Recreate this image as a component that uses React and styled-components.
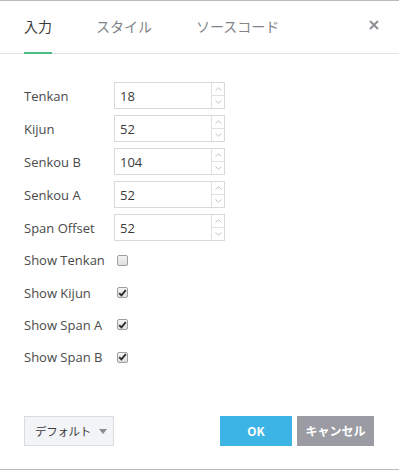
import React from 'react';
import styled, { createGlobalStyle } from 'styled-components';

const Global = createGlobalStyle`
  html, body { margin: 0; padding: 0; background: #fff; }
  body { font-family: "Open Sans", "Noto Sans CJK JP", sans-serif; }
`;

const Dialog = styled.div`
  width: 399px;
  height: 470px;
  box-sizing: border-box;
  border-top: 1px solid #bcbcbc;
  border-bottom: 1px solid #bcbcbc;
  display: flex;
  flex-direction: column;
  background: #fff;
`;

const Header = styled.div`
  height: 53px;
  box-sizing: border-box;
  padding: 0 20px 0 24px;
  display: flex;
  align-items: stretch;
  border-bottom: 1px solid #e1e3e6;
`;

const Tab = styled.div`
  position: relative;
  display: flex;
  align-items: center;
  margin-right: 44px;
  font-size: 14px;
  color: ${p => (p.$active ? '#3a3a3a' : '#808388')};
  font-family: "Noto Sans CJK JP", sans-serif;
  padding-bottom: 2px;
  &::after {
    content: '';
    display: ${p => (p.$active ? 'block' : 'none')};
    position: absolute;
    left: 0;
    right: 0;
    bottom: -1px;
    height: 2px;
    background: #4dbb85;
  }
`;

const Close = styled.div`
  margin-left: auto;
  display: flex;
  align-items: center;
  padding-bottom: 4px;
`;

const Body = styled.div`
  flex: 1;
  padding: 28px 24px 0;
`;

const FieldRow = styled.div`
  display: flex;
  align-items: center;
  height: 27px;
  margin-bottom: 6px;
`;

const Label = styled.div`
  width: 90px;
  font-size: 13px;
  color: #4a4a4a;
`;

const NumberBox = styled.div`
  width: 111px;
  height: 27px;
  box-sizing: border-box;
  border: 1px solid #d9d9d9;
  display: flex;
`;

const Value = styled.div`
  flex: 1;
  font-size: 13px;
  color: #3a3a3a;
  padding: 0 5px;
  display: flex;
  align-items: center;
  padding-top: 1px;
`;

const Spinner = styled.div`
  width: 12px;
  border-left: 1px solid #e1e1e1;
  display: flex;
  flex-direction: column;
`;

const SpinHalf = styled.div`
  flex: 1;
  display: flex;
  align-items: center;
  justify-content: center;
  & + & { border-top: 1px solid #e1e1e1; }
`;

const CheckList = styled.div`
  margin-top: -3px;
`;

const CheckRow = styled.div`
  display: flex;
  align-items: center;
  height: 32.4px;
`;

const Box = styled.span`
  width: 11px;
  height: 11px;
  margin-left: 3px;
  box-sizing: border-box;
  border: 1px solid #9e9e9e;
  border-radius: 2px;
  background: linear-gradient(#f4f4f4, #dedede);
  display: flex;
  align-items: center;
  justify-content: center;
`;

const Footer = styled.div`
  height: 53px;
  padding: 0 25px 0 24px;
  display: flex;
  align-items: flex-start;
`;

const Select = styled.div`
  width: 90px;
  height: 30px;
  box-sizing: border-box;
  border: 1px solid #d8dbe0;
  background: #f3f4f7;
  display: flex;
  align-items: center;
  padding-left: 10px;
  font-size: 11.5px;
  letter-spacing: -0.3px;
  color: #3a3a3a;
  font-family: "Noto Sans CJK JP", sans-serif;
  gap: 8px;
`;

const Caret = styled.span`
  width: 0;
  height: 0;
  border-left: 4.5px solid transparent;
  border-right: 4.5px solid transparent;
  border-top: 5px solid #8a8a8a;
`;

const Button = styled.div`
  width: ${p => p.$w}px;
  height: 30px;
  margin-left: ${p => p.$ml || 0}px;
  background: ${p => p.$bg};
  color: #fff;
  font-weight: bold;
  font-size: 12px;
  font-family: "Noto Sans CJK JP", sans-serif;
  display: flex;
  align-items: center;
  justify-content: center;
  padding-bottom: 2px;
  box-sizing: border-box;
`;

const Chevron = ({ up }) => (
  <svg width="7" height="4" viewBox="0 0 7 4">
    <path d={up ? 'M0.5 3.5 L3.5 0.8 L6.5 3.5' : 'M0.5 0.5 L3.5 3.2 L6.5 0.5'} fill="none" stroke="#b4bcc4" strokeWidth="0.9" />
  </svg>
);

const fields = [
  ['Tenkan', 18],
  ['Kijun', 52],
  ['Senkou B', 104],
  ['Senkou A', 52],
  ['Span Offset', 52],
];

const checks = [
  ['Show Tenkan', false],
  ['Show Kijun', true],
  ['Show Span A', true],
  ['Show Span B', true],
];

export default function App() {
  return (
    <Dialog>
      <Global />
      <Header>
        <Tab $active>入力</Tab>
        <Tab>スタイル</Tab>
        <Tab>ソースコード</Tab>
        <Close>
          <svg width="10" height="10" viewBox="0 0 10 10">
            <path d="M1 1 L9 9 M9 1 L1 9" stroke="#8c8f94" strokeWidth="2" />
          </svg>
        </Close>
      </Header>
      <Body>
        {fields.map(([name, v]) => (
          <FieldRow key={name}>
            <Label>{name}</Label>
            <NumberBox>
              <Value>{v}</Value>
              <Spinner>
                <SpinHalf><Chevron up /></SpinHalf>
                <SpinHalf><Chevron /></SpinHalf>
              </Spinner>
            </NumberBox>
          </FieldRow>
        ))}
        <CheckList>
          {checks.map(([name, on]) => (
            <CheckRow key={name}>
              <Label>{name}</Label>
              <Box>
                {on && (
                  <svg width="9" height="8" viewBox="0 0 9 8">
                    <path d="M1.2 4.2 L3.4 6.4 L7.8 1.2" fill="none" stroke="#2b2b2b" strokeWidth="1.8" />
                  </svg>
                )}
              </Box>
            </CheckRow>
          ))}
        </CheckList>
      </Body>
      <Footer>
        <Select>デフォルト<Caret /></Select>
        <Button $w={72} $bg="#3cb4e5" style={{ marginLeft: 'auto' }}>OK</Button>
        <Button $w={77} $bg="#9b9ca3" $ml={5}>キャンセル</Button>
      </Footer>
    </Dialog>
  );
}
